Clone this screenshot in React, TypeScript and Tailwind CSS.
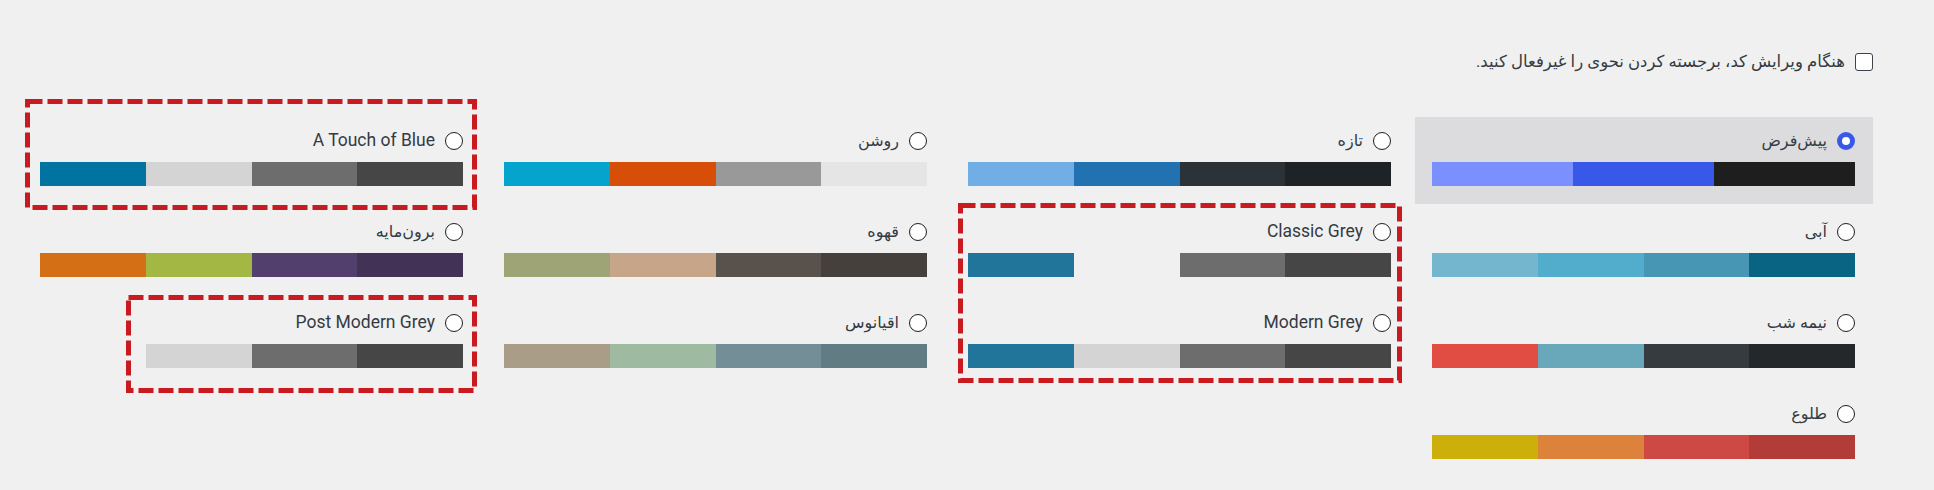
import React from 'react';

interface Scheme {
  name: string;
  colors: string[];
  selected?: boolean;
}

// listed in grid order (rtl: first item sits at the right)
const schemes: Scheme[] = [
  { name: 'پیش‌فرض', colors: ['#7b90ff', '#3858e9', '#1e1e1e'], selected: true },
  { name: 'تازه', colors: ['#72aee6', '#2271b1', '#2c3338', '#1d2327'] },
  { name: 'روشن', colors: ['#04a4cc', '#d64e07', '#999999', '#e5e5e5'] },
  { name: 'A Touch of Blue', colors: ['#0073a0', '#d4d4d4', '#6d6d6d', '#464646'] },
  { name: 'آبی', colors: ['#74b6ce', '#52accc', '#4796b3', '#096484'] },
  { name: 'Classic Grey', colors: ['#21759b', 'transparent', '#6d6d6d', '#464646'] },
  { name: 'قهوه', colors: ['#9ea476', '#c7a589', '#59524c', '#46403c'] },
  { name: 'برون‌مایه', colors: ['#d46f15', '#a3b745', '#523f6d', '#413256'] },
  { name: 'نیمه شب', colors: ['#e14d43', '#69a8bb', '#363b3f', '#25282b'] },
  { name: 'Modern Grey', colors: ['#21759b', '#d4d4d4', '#6d6d6d', '#464646'] },
  { name: 'اقیانوس', colors: ['#aa9d88', '#9ebaa0', '#738e96', '#627c83'] },
  { name: 'Post Modern Grey', colors: ['transparent', '#d4d4d4', '#6d6d6d', '#464646'] },
  { name: 'طلوع', colors: ['#ccaf0b', '#dd823b', '#cf4944', '#b43c38'] },
];

function ColorOption({ scheme }: { scheme: Scheme }) {
  const latin = /^[A-Za-z ]+$/.test(scheme.name);
  return (
    <div className={`h-[87px] pt-[15px] pr-[18px] pl-[17px] ${scheme.selected ? 'bg-[#dcdcde]' : ''}`}>
      <label className="flex h-[18px] items-center gap-[10px]">
        {scheme.selected ? (
          <span className="block h-[18px] w-[18px] shrink-0 rounded-full border-[5px] border-[#3858e9] bg-white" />
        ) : (
          <span className="block h-[18px] w-[18px] shrink-0 rounded-full border border-[#1e1e1e] bg-white" />
        )}
        <span className={`leading-none text-[#343b42] ${latin ? 'text-[17.5px]' : 'text-[16px]'}`}>{scheme.name}</span>
      </label>
      <div dir="ltr" className="mt-[12px] flex h-[24px]">
        {scheme.colors.map((c, i) => (
          <div key={i} className="h-full flex-1" style={{ backgroundColor: c }} />
        ))}
      </div>
    </div>
  );
}

function DashedBox({ className, w, h }: { className: string; w: number; h: number }) {
  return (
    <div className={`pointer-events-none absolute ${className}`}>
      <svg width={w + 5} height={h + 5}>
        <rect x={2.5} y={2.5} width={w} height={h} fill="none" stroke="#c81a1f" strokeWidth={5} strokeDasharray="15 5" />
      </svg>
    </div>
  );
}

export default function App() {
  return (
    <div
      dir="rtl"
      className="relative min-h-[490px] w-full bg-[#f0f0f1] pt-[53px] pr-[61px] pl-[23px]"
      style={{ fontFamily: 'Roboto, "DejaVu Sans", sans-serif' }}
    >
      <label className="flex h-[18px] items-center gap-[10px]">
        <span className="block h-[18px] w-[18px] shrink-0 rounded-[3px] border-[1.5px] border-[#3c434a] bg-white" />
        <span className="text-[16.5px] leading-none text-[#343b42]">
          هنگام ویرایش کد، برجسته کردن نحوی را غیرفعال کنید.
        </span>
      </label>

      <div className="mt-[46px] grid grid-cols-[458px_458px_458px_458px] gap-x-[6px] gap-y-[4px]">
        {schemes.map((s) => (
          <ColorOption key={s.name} scheme={s} />
        ))}
      </div>

      <DashedBox className="left-[25px] top-[99px]" w={447} h={106} />
      <DashedBox className="left-[958px] top-[203px]" w={439} h={175} />
      <DashedBox className="left-[126px] top-[295px]" w={346} h={93} />
    </div>
  );
}
